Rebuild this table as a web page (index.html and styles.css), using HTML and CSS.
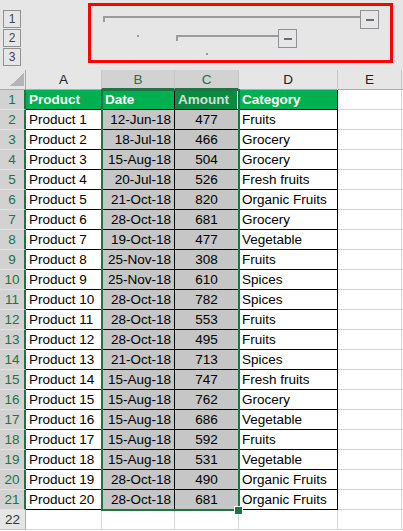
FILE: index.html
```html
<!DOCTYPE html>
<html>
<head>
<meta charset="utf-8">
<link rel="stylesheet" href="styles.css">
</head>
<body>
<div class="top">
  <div class="levels">
    <div class="lvl">1</div>
    <div class="lvl">2</div>
    <div class="lvl">3</div>
  </div>
  <div class="groups">
    <div class="grp g1"><span class="brk b1"></span><span class="btn"></span></div>
    <div class="grp g2"><span class="dot d1"></span><span class="brk b2"></span><span class="btn"></span></div>
    <div class="grp g3"><span class="dot d2"></span></div>
  </div>
  <div class="redbox"></div>
</div>
<div class="sheet">
  <div class="corner"></div><div class="ch">A</div><div class="ch sel">B</div><div class="ch sel">C</div><div class="ch">D</div><div class="ch">E</div><div class="ch end"></div>

  <div class="rh sel">1</div><div class="c t hd">Product</div><div class="c t hd act">Date</div><div class="c t hd shd">Amount</div><div class="c t hd">Category</div><div class="c"></div><div class="c end"></div>
  <div class="rh sel">2</div><div class="c t">Product 1</div><div class="c t s r">12-Jun-18</div><div class="c t s m">477</div><div class="c t">Fruits</div><div class="c"></div><div class="c end"></div>
  <div class="rh sel">3</div><div class="c t">Product 2</div><div class="c t s r">18-Jul-18</div><div class="c t s m">466</div><div class="c t">Grocery</div><div class="c"></div><div class="c end"></div>
  <div class="rh sel">4</div><div class="c t">Product 3</div><div class="c t s r">15-Aug-18</div><div class="c t s m">504</div><div class="c t">Grocery</div><div class="c"></div><div class="c end"></div>
  <div class="rh sel">5</div><div class="c t">Product 4</div><div class="c t s r">20-Jul-18</div><div class="c t s m">526</div><div class="c t">Fresh fruits</div><div class="c"></div><div class="c end"></div>
  <div class="rh sel">6</div><div class="c t">Product 5</div><div class="c t s r">21-Oct-18</div><div class="c t s m">820</div><div class="c t">Organic Fruits</div><div class="c"></div><div class="c end"></div>
  <div class="rh sel">7</div><div class="c t">Product 6</div><div class="c t s r">28-Oct-18</div><div class="c t s m">681</div><div class="c t">Grocery</div><div class="c"></div><div class="c end"></div>
  <div class="rh sel">8</div><div class="c t">Product 7</div><div class="c t s r">19-Oct-18</div><div class="c t s m">477</div><div class="c t">Vegetable</div><div class="c"></div><div class="c end"></div>
  <div class="rh sel">9</div><div class="c t">Product 8</div><div class="c t s r">25-Nov-18</div><div class="c t s m">308</div><div class="c t">Fruits</div><div class="c"></div><div class="c end"></div>
  <div class="rh sel">10</div><div class="c t">Product 9</div><div class="c t s r">25-Nov-18</div><div class="c t s m">610</div><div class="c t">Spices</div><div class="c"></div><div class="c end"></div>
  <div class="rh sel">11</div><div class="c t">Product 10</div><div class="c t s r">28-Oct-18</div><div class="c t s m">782</div><div class="c t">Spices</div><div class="c"></div><div class="c end"></div>
  <div class="rh sel">12</div><div class="c t">Product 11</div><div class="c t s r">28-Oct-18</div><div class="c t s m">553</div><div class="c t">Fruits</div><div class="c"></div><div class="c end"></div>
  <div class="rh sel">13</div><div class="c t">Product 12</div><div class="c t s r">28-Oct-18</div><div class="c t s m">495</div><div class="c t">Fruits</div><div class="c"></div><div class="c end"></div>
  <div class="rh sel">14</div><div class="c t">Product 13</div><div class="c t s r">21-Oct-18</div><div class="c t s m">713</div><div class="c t">Spices</div><div class="c"></div><div class="c end"></div>
  <div class="rh sel">15</div><div class="c t">Product 14</div><div class="c t s r">15-Aug-18</div><div class="c t s m">747</div><div class="c t">Fresh fruits</div><div class="c"></div><div class="c end"></div>
  <div class="rh sel">16</div><div class="c t">Product 15</div><div class="c t s r">15-Aug-18</div><div class="c t s m">762</div><div class="c t">Grocery</div><div class="c"></div><div class="c end"></div>
  <div class="rh sel">17</div><div class="c t">Product 16</div><div class="c t s r">15-Aug-18</div><div class="c t s m">686</div><div class="c t">Vegetable</div><div class="c"></div><div class="c end"></div>
  <div class="rh sel">18</div><div class="c t">Product 17</div><div class="c t s r">15-Aug-18</div><div class="c t s m">592</div><div class="c t">Fruits</div><div class="c"></div><div class="c end"></div>
  <div class="rh sel">19</div><div class="c t">Product 18</div><div class="c t s r">15-Aug-18</div><div class="c t s m">531</div><div class="c t">Vegetable</div><div class="c"></div><div class="c end"></div>
  <div class="rh sel">20</div><div class="c t">Product 19</div><div class="c t s r">28-Oct-18</div><div class="c t s m">490</div><div class="c t">Organic Fruits</div><div class="c"></div><div class="c end"></div>
  <div class="rh sel">21</div><div class="c t">Product 20</div><div class="c t s r">28-Oct-18</div><div class="c t s m">681</div><div class="c t">Organic Fruits</div><div class="c"></div><div class="c end"></div>
  <div class="rh">22</div><div class="c"></div><div class="c"></div><div class="c"></div><div class="c"></div><div class="c"></div><div class="c end"></div>

  <div class="selection"></div>
  <div class="handle"></div>
</div>
</body>
</html>
```
FILE: styles.css
```css
html, body {
  margin: 0;
  padding: 0;
}
body {
  width: 403px;
  height: 531px;
  overflow: hidden;
  background: #ffffff;
  font-family: "Liberation Sans", Arial, sans-serif;
}

/* ---------- outline (group) area ---------- */
.top {
  position: relative;
  height: 70px;
  background: #e6e6e6;
  display: flex;
}
.levels {
  padding: 10px 0 0 3px;
  display: flex;
  flex-direction: column;
  gap: 1px;
}
.lvl {
  box-sizing: border-box;
  width: 18px;
  height: 18px;
  border: 1px solid #8e9196;
  color: #444;
  font-size: 12px;
  line-height: 16px;
  text-align: center;
}
.groups {
  padding-top: 10px;
  display: flex;
  flex-direction: column;
}
.grp {
  height: 19px;
  display: flex;
  align-items: flex-start;
}
.g1 { margin-left: 82px; }
.g2 { margin-left: 116px; }
.g3 { margin-left: 185px; }
.brk {
  box-sizing: border-box;
  height: 6px;
  margin-top: 6px;
  border-top: 2px solid #9b9b9b;
  border-left: 2px solid #9b9b9b;
}
.b1 { width: 257px; }
.b2 { width: 102px; margin-left: 37px; }
.dot {
  width: 2px;
  height: 2px;
  background: #9b9b9b;
}
.d1 { margin-top: 6px; }
.d2 { margin-top: 5px; }
.btn {
  box-sizing: border-box;
  width: 19px;
  height: 19px;
  border: 1px solid #8e9196;
  display: flex;
  align-items: center;
  justify-content: center;
}
.btn::before {
  content: "";
  width: 8px;
  height: 2px;
  background: #6b6b6b;
}
.redbox {
  position: absolute;
  left: 88px;
  top: 3px;
  width: 305px;
  height: 60px;
  box-sizing: border-box;
  border: 3px solid #ff0000;
}

/* ---------- sheet grid ---------- */
.sheet {
  position: relative;
  display: grid;
  grid-template-columns: 26px 76px 73px 64px 99px 64px 1fr;
  grid-auto-rows: 20px;
}
.corner {
  position: relative;
  background: #e6e6e6;
  box-sizing: border-box;
  border-right: 1px solid #ababab;
  border-bottom: 1px solid #ababab;
}
.corner::after {
  content: "";
  position: absolute;
  right: 1px;
  bottom: 3px;
  width: 14px;
  height: 13px;
  background: linear-gradient(to top left, #b4b4b4 50%, transparent 51%);
}
.ch {
  box-sizing: border-box;
  background: #e6e6e6;
  border-right: 1px solid #c6c6c6;
  border-bottom: 1px solid #ababab;
  color: #222;
  font-size: 13.5px;
  line-height: 20px;
  text-align: center;
}
.ch.sel {
  background: #d2d2d2;
  color: #217346;
  border-bottom: 2px solid #217346;
}
.ch.end {
  border-right: 0;
}
.rh {
  box-sizing: border-box;
  background: #e6e6e6;
  border-right: 1px solid #ababab;
  border-bottom: 1px solid #c8c8c8;
  color: #333;
  font-size: 13.5px;
  line-height: 19px;
  text-align: center;
}
.rh.sel {
  background: #d2d2d2;
  color: #217346;
  border-right: 2px solid #217346;
  border-bottom-color: #e2e2e2;
}
.c {
  box-sizing: border-box;
  border-right: 1px solid #d4d4d4;
  border-bottom: 1px solid #d4d4d4;
  font-size: 13.5px;
  line-height: 19px;
  padding: 0 3px;
  white-space: nowrap;
  overflow: hidden;
  color: #000;
}
.c.end {
  border-right: 0;
  padding: 0;
}
.t {
  border-color: #000;
}
.hd {
  background: #00b050;
  color: #ffffff;
  font-weight: bold;
}
.act {
  box-shadow: inset 1px 1px 0 #ffffff;
}
.shd {
  background: #0b8a41;
  color: #cfe0d5;
  box-shadow: inset -1px 1px 0 #ffffff;
}
.s {
  background: #c6c6c6;
}
.r {
  text-align: right;
}
.m {
  text-align: center;
}
.selection {
  position: absolute;
  left: 101px;
  top: 19px;
  width: 139px;
  height: 422px;
  box-sizing: border-box;
  border: 2px solid #217346;
  pointer-events: none;
}
.handle {
  position: absolute;
  left: 235px;
  top: 437px;
  width: 7px;
  height: 7px;
  box-sizing: border-box;
  background: #217346;
  outline: 1px solid #ffffff;
}
```
